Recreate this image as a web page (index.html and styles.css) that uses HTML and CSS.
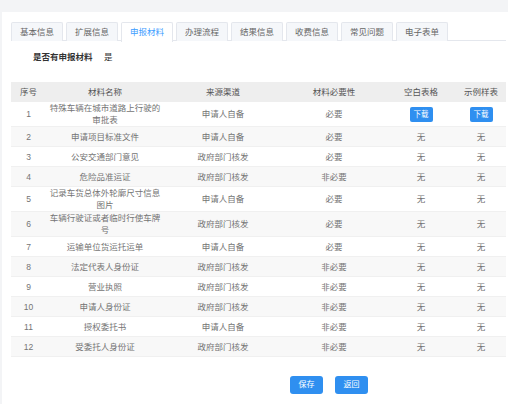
FILE: index.html
```html
<!DOCTYPE html>
<html lang="zh-CN">
<head>
  <meta charset="UTF-8" />
  <title>申报材料</title>
  <link rel="stylesheet" href="styles.css">
</head>
<body>
  <div class="panel">
    <div class="tabs">
      <div class="tab">基本信息</div>
      <div class="tab">扩展信息</div>
      <div class="tab active">申报材料</div>
      <div class="tab">办理流程</div>
      <div class="tab">结果信息</div>
      <div class="tab">收费信息</div>
      <div class="tab">常见问题</div>
      <div class="tab">电子表单</div>
    </div>

    <div class="info">
      <span class="info-label">是否有申报材料</span>
      <span class="info-value">是</span>
    </div>

    <table class="materials">
      <colgroup>
        <col class="c-no"><col class="c-name"><col class="c-src"><col class="c-need"><col class="c-blank"><col class="c-sample">
      </colgroup>
      <thead>
        <tr>
          <th>序号</th>
          <th>材料名称</th>
          <th>来源渠道</th>
          <th>材料必要性</th>
          <th>空白表格</th>
          <th>示例样表</th>
        </tr>
      </thead>
      <tbody>
        <tr>
          <td>1</td><td>特殊车辆在城市道路上行驶的审批表</td><td>申请人自备</td><td>必要</td>
          <td><span class="btn-sm">下载</span></td><td><span class="btn-sm">下载</span></td>
        </tr>
        <tr><td>2</td><td>申请项目标准文件</td><td>申请人自备</td><td>必要</td><td>无</td><td>无</td></tr>
        <tr><td>3</td><td>公安交通部门意见</td><td>政府部门核发</td><td>必要</td><td>无</td><td>无</td></tr>
        <tr><td>4</td><td>危险品准运证</td><td>政府部门核发</td><td>非必要</td><td>无</td><td>无</td></tr>
        <tr><td>5</td><td>记录车货总体外轮廓尺寸信息图片</td><td>申请人自备</td><td>必要</td><td>无</td><td>无</td></tr>
        <tr><td>6</td><td>车辆行驶证或者临时行使车牌号</td><td>政府部门核发</td><td>必要</td><td>无</td><td>无</td></tr>
        <tr><td>7</td><td>运输单位货运托运单</td><td>申请人自备</td><td>必要</td><td>无</td><td>无</td></tr>
        <tr><td>8</td><td>法定代表人身份证</td><td>政府部门核发</td><td>非必要</td><td>无</td><td>无</td></tr>
        <tr><td>9</td><td>营业执照</td><td>政府部门核发</td><td>非必要</td><td>无</td><td>无</td></tr>
        <tr><td>10</td><td>申请人身份证</td><td>政府部门核发</td><td>非必要</td><td>无</td><td>无</td></tr>
        <tr><td>11</td><td>授权委托书</td><td>申请人自备</td><td>非必要</td><td>无</td><td>无</td></tr>
        <tr><td>12</td><td>受委托人身份证</td><td>政府部门核发</td><td>非必要</td><td>无</td><td>无</td></tr>
      </tbody>
    </table>

    <div class="actions">
      <span class="btn">保存</span>
      <span class="btn">返回</span>
    </div>
  </div>
</body>
</html>
```

FILE: styles.css
```css
:root {
  --page-bg: #f3f4f6;
  --line: #e4e7ed;
  --tab-bg: #f5f7fa;
  --blue: #409eff;
  --btn-blue: #2f8ff0;
  --head-bg: #eeeeee;
  --stripe: #f8f8f8;
  --text: #747474;
  --text-dark: #333;
}
* { box-sizing: border-box; margin: 0; padding: 0; }
body {
  font-family: "Liberation Sans", "Noto Sans CJK SC", sans-serif;
  font-size: 8.5px;
  background: var(--page-bg);
  color: var(--text);
  height: 404px;
  overflow: hidden;
}
.panel { margin: 12px 0 0 2px; background: #fff; height: 392px; padding: 10px 2px 0 9px; }

.tabs { display: flex; gap: 3px; border-bottom: 1px solid var(--line); height: 19px; }
.tab {
  width: 52px; height: 19px; line-height: 18px; text-align: center;
  background: var(--tab-bg); border: 1px solid var(--line); border-bottom: none;
  border-radius: 2px 2px 0 0; color: #666;
}
.tab.active { background: #fff; color: var(--blue); height: 20px; }

.info { margin: 10px 0 0 22px; line-height: 12px; color: var(--text-dark); }
.info-label { font-weight: bold; }
.info-value { margin-left: 9px; }

.materials { margin-top: 19px; width: 100%; border-collapse: collapse; table-layout: fixed; }
.c-no { width: 35px; }
.c-name { width: 118px; }
.c-src { width: 118px; }
.c-need { width: 104px; }
.c-blank { width: 70px; }
.materials th {
  background: var(--head-bg); color: #555; font-weight: normal;
  height: 20px; line-height: 12px; text-align: center;
}
.materials td {
  height: 20px; padding: 0 2px; line-height: 12px; text-align: center;
  border-bottom: 1px solid #f0f0f0;
}
.materials tbody tr:nth-child(even) td { background: var(--stripe); }

.btn-sm {
  display: inline-block; width: 23px; height: 15px; line-height: 15px;
  background: var(--btn-blue); color: #fff; font-size: 7.5px; border-radius: 2px;
  vertical-align: middle;
}

.actions { display: flex; gap: 12px; margin: 19px 0 0 279px; }
.btn {
  width: 33px; height: 18px; line-height: 18px; text-align: center;
  background: var(--btn-blue); color: #fff; font-size: 8px; border-radius: 3px;
}
```
